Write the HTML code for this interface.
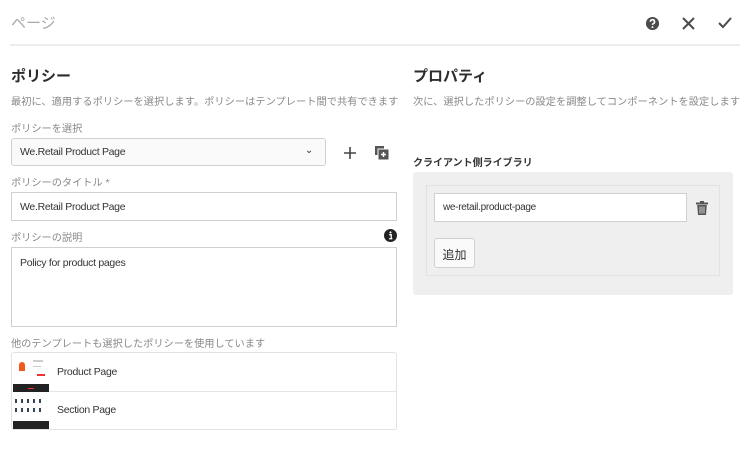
<!DOCTYPE html>
<html><head><meta charset="utf-8"><style>
*{margin:0;padding:0;box-sizing:border-box}
body{width:750px;height:463px;background:#fff;font-family:"Liberation Sans","Noto Sans CJK JP",sans-serif;position:relative;overflow:hidden;color:#333}
.a{position:absolute;white-space:nowrap}
.lbl{font-size:10.2px;color:#888}
.box{position:absolute;border:1px solid #d0d0d0;background:#fff;font-size:10.5px;letter-spacing:-0.3px;color:#333}
</style></head><body>
<div class="a" style="left:11px;top:12px;font-size:15px;color:#aaa">ページ</div>
<div class="a" style="left:10px;top:44px;width:730px;height:2px;background:#ececec"></div>
<svg class="a" style="left:645px;top:16px" width="15" height="15" viewBox="0 0 16 16"><circle cx="8" cy="8" r="7" fill="#4b4b4b"/><path d="M5.8 6.2a2.2 2.2 0 1 1 3 2c-.6.3-.8.6-.8 1.3" stroke="#fff" stroke-width="1.7" fill="none"/><circle cx="8" cy="11.8" r="1" fill="#fff"/></svg>
<svg class="a" style="left:682px;top:17px" width="13" height="13" viewBox="0 0 13 13"><path d="M1 1l11 11M12 1L1 12" stroke="#4b4b4b" stroke-width="2"/></svg>
<svg class="a" style="left:718px;top:17px" width="14" height="12" viewBox="0 0 14 12"><path d="M1 6l4 4 8-9" stroke="#4b4b4b" stroke-width="2" fill="none"/></svg>

<div class="a" style="left:11px;top:65px;font-size:15px;font-weight:bold;color:#2c2c2c">ポリシー</div>
<div class="a lbl" style="left:11px;top:93px;letter-spacing:0.05px">最初に、適用するポリシーを選択します。ポリシーはテンプレート間で共有できます</div>
<div class="a lbl" style="left:11px;top:120px">ポリシーを選択</div>
<div class="box" style="left:11px;top:138px;width:315px;height:28px;background:#fafafa;border-radius:3px;padding:7px 8px">We.Retail Product Page<span style="position:absolute;right:12px;top:6px;font-size:10px">&#8964;</span></div>
<svg class="a" style="left:344px;top:147px" width="12" height="12"><path d="M6 0v12M0 6h12" stroke="#444" stroke-width="1.6"/></svg>
<svg class="a" style="left:375px;top:146px" width="14" height="14" viewBox="0 0 14 14"><rect x="0" y="0" width="9" height="9" fill="#555"/><rect x="3" y="3" width="11" height="11" fill="#555" stroke="#fff" stroke-width="1"/><path d="M8.5 6v5M6 8.5h5" stroke="#fff" stroke-width="1.5"/></svg>
<div class="a lbl" style="left:11px;top:174px">ポリシーのタイトル *</div>
<div class="box" style="left:11px;top:192px;width:386px;height:29px;padding:8px 8px">We.Retail Product Page</div>
<div class="a lbl" style="left:11px;top:229px">ポリシーの説明</div>
<svg class="a" style="left:384px;top:229px" width="13" height="13" viewBox="0 0 16 16"><circle cx="8" cy="8" r="8" fill="#222"/><circle cx="8" cy="4.2" r="1.3" fill="#fff"/><path d="M6.3 7h2.6v5h1.3M6.3 12h4" stroke="#fff" stroke-width="1.6" fill="none"/></svg>
<div class="box" style="left:11px;top:247px;width:386px;height:80px;padding:9px 8px">Policy for product pages</div>
<div class="a lbl" style="left:11px;top:335px">他のテンプレートも選択したポリシーを使用しています</div>
<div class="box" style="left:11px;top:352px;width:386px;height:78px;border-color:#e2e2e2;border-radius:3px">
 <div style="position:absolute;left:0;top:38px;width:100%;height:1px;background:#e6e6e6"></div>
 <div style="position:absolute;left:1px;top:1px;width:36px;height:38px;background:#fff">
  <div style="position:absolute;left:6px;top:8px;width:6px;height:9px;background:#f05a1e;border-radius:3px 3px 0 0"></div>
  <div style="position:absolute;left:20px;top:6px;width:10px;height:2px;background:#ccc"></div>
  <div style="position:absolute;left:20px;top:12px;width:8px;height:1px;background:#ccc"></div>
  <div style="position:absolute;left:24px;top:20px;width:8px;height:2px;background:#e33"></div>
  <div style="position:absolute;left:0;top:30px;width:36px;height:8px;background:#222"></div>
  <div style="position:absolute;left:15px;top:34px;width:6px;height:1px;background:#e33"></div>
 </div>
 <div style="position:absolute;left:1px;top:39px;width:36px;height:37px;background:#fff">
  <div style="position:absolute;left:2px;top:7px;width:30px;height:4px;background:repeating-linear-gradient(90deg,#345 0 2px,transparent 2px 6px)"></div>
  <div style="position:absolute;left:2px;top:16px;width:30px;height:4px;background:repeating-linear-gradient(90deg,#345 0 2px,transparent 2px 6px)"></div>
  <div style="position:absolute;left:0;top:29px;width:36px;height:8px;background:#222"></div>
 </div>
 <div class="a" style="left:45px;top:13px;font-size:10.5px">Product Page</div>
 <div class="a" style="left:45px;top:51px;font-size:10.5px">Section Page</div>
</div>

<div class="a" style="left:413px;top:65px;font-size:15px;font-weight:bold;color:#2c2c2c">プロパティ</div>
<div class="a lbl" style="left:413px;top:93px;letter-spacing:0.05px">次に、選択したポリシーの設定を調整してコンポーネントを設定します</div>
<div class="a" style="left:413px;top:154px;font-size:10px;font-weight:bold;color:#333">クライアント側ライブラリ</div>
<div class="a" style="left:413px;top:172px;width:320px;height:123px;background:#efefef;border-radius:3px"></div>
<div class="a" style="left:426px;top:185px;width:294px;height:91px;border:1px solid #e2e2e2"></div>
<div class="box" style="left:434px;top:193px;width:253px;height:29px;padding:8px 8px;font-size:10px">we-retail.product-page</div>
<svg class="a" style="left:696px;top:201px" width="12" height="14" viewBox="0 0 12 14"><rect x="0" y="1.5" width="12" height="2" fill="#555"/><rect x="4" y="0" width="4" height="2" fill="#555"/><path d="M1.2 4h9.6l-.8 10H2z" fill="#555"/><path d="M4 5.5v7M6 5.5v7M8 5.5v7" stroke="#efefef" stroke-width=".8"/></svg>
<div class="box" style="left:434px;top:238px;width:41px;height:30px;background:#fafafa;border-radius:3px;padding:7px 0;text-align:center;font-size:12px;letter-spacing:0">追加</div>
</body></html>
